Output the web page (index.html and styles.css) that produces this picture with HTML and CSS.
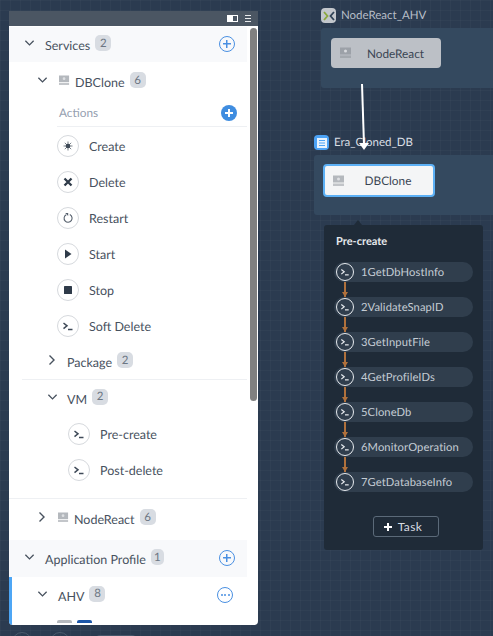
FILE: index.html
```html
<!DOCTYPE html>
<html lang="en">
<head>
<meta charset="utf-8">
<title>Blueprint editor</title>
<link rel="stylesheet" href="styles.css">
</head>
<body>
<svg width="0" height="0" class="defs">
  <defs>
    <symbol id="down" viewBox="0 0 12 8"><path d="M1.500 1.500 6 6l4.500-4.500" fill="none" stroke="currentColor" stroke-width="1.400"/></symbol>
    <symbol id="right" viewBox="0 0 8 12"><path d="M1.500 1.500 6 6l-4.500 4.500" fill="none" stroke="currentColor" stroke-width="1.400"/></symbol>
    <symbol id="term" viewBox="0 0 22 22"><path d="M6.500 8 10 10.800 6.500 13.600" fill="none" stroke="currentColor" stroke-width="1.500"/><path d="M11 14.500h4.500" fill="none" stroke="currentColor" stroke-width="1.500"/></symbol>
    <symbol id="server" viewBox="0 0 12 11"><path d="M0 0h11v7H0z" fill="currentColor"/><circle cx="5.500" cy="3.500" r="1.500" fill="#eceef0" opacity=".75"/><path d="M0 8h11v2.500H0z" fill="currentColor" opacity=".8"/></symbol>
  </defs>
</svg>

<div class="panel">
  <div class="panel-bar">
    <span class="layout-icon"><span class="layout-icon-fill"></span></span>
    <span class="menu-icon"></span>
  </div>
  <div class="tree">
    <div class="section section-services">
      <svg class="chev chev-l1"><use href="#down"/></svg>
      <span class="label">Services</span><span class="badge">2</span>
      <span class="add-outline"></span>
    </div>
    <div class="row row-dbclone">
      <svg class="chev chev-l2"><use href="#down"/></svg>
      <svg class="srv"><use href="#server"/></svg>
      <span class="label">DBClone</span><span class="badge">6</span>
    </div>
    <div class="row row-actions">
      <span class="muted">Actions</span>
      <span class="add-solid"></span>
    </div>
    <div class="actions">
      <div class="action">
        <span class="circle"><svg width="22" height="22" viewBox="0 0 22 22"><circle cx="11" cy="11" r="2.300" fill="#3f4a58"/><path d="M11 6.500v9M6.500 11h9M7.800 7.800l6.400 6.400M14.200 7.800l-6.400 6.400" stroke="#3f4a58" stroke-width=".7"/></svg></span>
        <span class="label">Create</span>
      </div>
      <div class="action">
        <span class="circle"><svg width="22" height="22" viewBox="0 0 22 22"><path d="M7.500 7.500l7 7M14.500 7.500l-7 7" stroke="#2f3b49" stroke-width="2.300"/></svg></span>
        <span class="label">Delete</span>
      </div>
      <div class="action">
        <span class="circle"><svg width="22" height="22" viewBox="0 0 22 22"><path d="M12.800 7.600a4 4 0 1 1-3.600.1" fill="none" stroke="#56606d" stroke-width="1.100"/><path d="M8.200 6h3v3z" fill="#56606d"/></svg></span>
        <span class="label">Restart</span>
      </div>
      <div class="action">
        <span class="circle"><svg width="22" height="22" viewBox="0 0 22 22"><path d="M8 6.500 14.500 11 8 15.500z" fill="#2f3b49"/></svg></span>
        <span class="label">Start</span>
      </div>
      <div class="action">
        <span class="circle"><svg width="22" height="22" viewBox="0 0 22 22"><rect x="7" y="7" width="8" height="8" rx=".6" fill="#2f3b49"/></svg></span>
        <span class="label">Stop</span>
      </div>
      <div class="action">
        <span class="circle"><svg class="term-ink"><use href="#term"/></svg></span>
        <span class="label">Soft Delete</span>
      </div>
    </div>
    <div class="row row-package">
      <svg class="chev-r chev-r3"><use href="#right"/></svg>
      <span class="label">Package</span><span class="badge">2</span>
    </div>
    <div class="row row-vm">
      <svg class="chev chev-l3"><use href="#down"/></svg>
      <span class="label">VM</span><span class="badge">2</span>
    </div>
    <div class="vm-tasks">
      <div class="action">
        <span class="circle"><svg class="term-ink"><use href="#term"/></svg></span>
        <span class="label">Pre-create</span>
      </div>
      <div class="action">
        <span class="circle"><svg class="term-ink"><use href="#term"/></svg></span>
        <span class="label">Post-delete</span>
      </div>
    </div>
    <div class="row row-node">
      <svg class="chev-r chev-r2"><use href="#right"/></svg>
      <svg class="srv"><use href="#server"/></svg>
      <span class="label">NodeReact</span><span class="badge">6</span>
    </div>
    <div class="section section-profile">
      <svg class="chev chev-l1"><use href="#down"/></svg>
      <span class="label">Application Profile</span><span class="badge badge-narrow">1</span>
      <span class="add-outline"></span>
    </div>
    <div class="profile">
      <div class="row row-ahv">
        <svg class="chev chev-l2"><use href="#down"/></svg>
        <span class="label label-ahv">AHV</span><span class="badge">8</span>
        <span class="more"><i></i><i></i><i></i></span>
      </div>
      <div class="stubs"><span class="stub stub-grey"></span><span class="stub stub-blue"></span></div>
    </div>
  </div>
  <div class="scrollbar"></div>
</div>

<svg class="link" width="30" height="90" viewBox="0 0 30 90"><path d="M11 3 13 64" stroke="#fff" stroke-width="2" fill="none"/><path d="M8 62h10l-5 7z" fill="#fff"/></svg>

<div class="group-title title-node">
  <span class="provider provider-ntx"><svg width="12" height="10" viewBox="0 0 12 10"><path d="M1 1l3.500 4L1 9" fill="none" stroke="#8aa83c" stroke-width="1.800"/><path d="M11 1 7.500 5 11 9" fill="none" stroke="#2f4256" stroke-width="1.800"/></svg></span>
  <span>NodeReact_AHV</span>
</div>
<div class="group group-node">
  <div class="node node-grey"><svg class="node-srv"><use href="#server"/></svg><span class="node-name">NodeReact</span></div>
</div>

<div class="group-title title-era">
  <span class="provider provider-era"><svg width="10" height="10" viewBox="0 0 10 10"><path d="M0 0h10v10H0z" fill="#e9f3fd"/><path d="M2 2.500h6M2 5h6M2 7.500h6" stroke="#4da3f5" stroke-width="1"/></svg></span>
  <span>Era_Cloned_DB</span>
</div>
<div class="group group-era">
  <div class="node node-selected"><svg class="node-srv"><use href="#server"/></svg><span class="node-name">DBClone</span></div>
</div>

<div class="popover">
  <div class="pop-title">Pre-create</div>
  <div class="tasks">
    <div class="task"><span class="task-icon"><svg class="term-light"><use href="#term"/></svg></span><span>1GetDbHostInfo</span></div>
    <div class="flow"></div>
    <div class="task"><span class="task-icon"><svg class="term-light"><use href="#term"/></svg></span><span>2ValidateSnapID</span></div>
    <div class="flow"></div>
    <div class="task"><span class="task-icon"><svg class="term-light"><use href="#term"/></svg></span><span>3GetInputFile</span></div>
    <div class="flow"></div>
    <div class="task"><span class="task-icon"><svg class="term-light"><use href="#term"/></svg></span><span>4GetProfileIDs</span></div>
    <div class="flow"></div>
    <div class="task"><span class="task-icon"><svg class="term-light"><use href="#term"/></svg></span><span>5CloneDb</span></div>
    <div class="flow"></div>
    <div class="task"><span class="task-icon"><svg class="term-light"><use href="#term"/></svg></span><span>6MonitorOperation</span></div>
    <div class="flow"></div>
    <div class="task"><span class="task-icon"><svg class="term-light"><use href="#term"/></svg></span><span>7GetDatabaseInfo</span></div>
  </div>
  <button class="task-btn" type="button"><span class="task-plus"></span>Task</button>
</div>

<div class="dock">
  <span class="dock-circle"></span><span class="dock-circle"></span><span class="dock-pill"></span>
</div>
</body>
</html>
```
FILE: styles.css
```css
* { box-sizing: border-box; }
html, body { margin: 0; height: 100%; }
body {
  position: relative;
  width: 493px;
  height: 636px;
  overflow: hidden;
  font-family: Lato, "Open Sans", sans-serif;
  text-rendering: geometricPrecision;
  color: #3f4a58;
  background-color: #2b3b50;
  background-image:
    linear-gradient(rgba(255,255,255,.025) 1px, transparent 1px),
    linear-gradient(90deg, rgba(255,255,255,.025) 1px, transparent 1px);
  background-size: 10px 10px;
}
.defs { position: absolute; }

/* left panel */
.panel {
  position: absolute;
  left: 9px; top: 11px;
  width: 249px; height: 614px;
  background: #fff;
  border-radius: 0 0 4px 4px;
  overflow: hidden;
}
.panel-bar {
  height: 15px;
  background: #4b5663;
  display: flex;
  align-items: center;
  justify-content: flex-end;
  gap: 7px;
  padding-right: 7px;
}
.layout-icon { width: 11px; height: 7px; border: 1px solid #fff; display: flex; }
.layout-icon-fill { width: 5px; background: #fff; }
.menu-icon {
  width: 6px; height: 7px;
  border-top: 1px solid #e8eaec;
  border-bottom: 1px solid #e8eaec;
  position: relative;
}
.menu-icon::after { content: ""; position: absolute; left: 0; right: 0; top: 2px; height: 1px; background: #e8eaec; }
.tree { width: 238px; font-size: 12.500px; }
.label { color: #47515e; white-space: nowrap; padding-top: 2px; }
.action .label { padding-top: 0; }
.badge {
  display: inline-flex; align-items: center; justify-content: center;
  width: 16px; height: 16px;
  margin-left: 5px; margin-top: -3px;
  border-radius: 5px;
  background: #d8dce2;
  color: #6c7683;
  font-size: 11.500px;
}
.badge-narrow { width: 13px; }
.section { display: flex; align-items: center; background: #f8f9fb; position: relative; }
.section-services { height: 35px; padding-left: 15px; margin-top: 1px; }
.section-profile { height: 37px; padding-left: 15px; }
.row { display: flex; align-items: center; position: relative; }
.chev { width: 11px; height: 8px; color: #47515e; flex: none; margin-top: -3px; }
.chev-r { width: 8px; height: 12px; color: #47515e; flex: none; margin-top: -3px; }
.chev-l1 { margin-right: 10px; }
.chev-l2 { margin-left: 28px; margin-right: 11px; }
.chev-l3 { margin-left: 38px; margin-right: 9px; }
.chev-r3 { margin-left: 39px; margin-right: 11px; }
.chev-r2 { margin-left: 29px; margin-right: 12px; }
.srv { width: 11px; height: 11px; margin-right: 5px; flex: none; margin-top: -3px; color: #b4b8bd; }
.add-outline {
  position: absolute;
  right: 12px; top: 50%;
  width: 16px; height: 16px;
  margin-top: -9px;
  border: 1.200px solid #4a90e2;
  border-radius: 50%;
  background:
    linear-gradient(#4a90e2,#4a90e2) center/8px 1.500px no-repeat,
    linear-gradient(#4a90e2,#4a90e2) center/1.500px 8px no-repeat;
}
.add-solid {
  position: absolute;
  right: 10px; top: 50%;
  width: 16px; height: 16px;
  margin-top: -8px;
  border-radius: 50%;
  background:
    linear-gradient(#fff,#fff) center/8px 2px no-repeat,
    linear-gradient(#fff,#fff) center/2px 8px no-repeat,
    #3f8de0;
}
.row-dbclone { height: 37px; padding-top: 2px; }
.row-actions { height: 27px; margin-left: 48px; padding-left: 2px; }
.muted { color: #95a0b0; font-size: 11.800px; }
.actions {
  margin-left: 48px;
  padding-top: 1px;
  border-top: 1px solid #eef0f3;
  display: flex; flex-direction: column;
}
.action { height: 36px; display: flex; align-items: center; }
.circle {
  width: 22px; height: 22px;
  border: 1px solid #d6d9dd;
  border-radius: 50%;
  display: flex; align-items: center; justify-content: center;
  margin-right: 10px;
  flex: none;
}
.circle svg { margin: -1px; flex: none; }
.term-ink { width: 22px; height: 22px; color: #3f4a58; }
.term-light { width: 18px; height: 18px; color: #e7ebef; }
.row-package { height: 36px; border-bottom: 1px solid #eef0f3; margin-left: 13px; }
.row-package .chev-r3 { margin-left: 26px; }
.row-vm { height: 36px; }
.vm-tasks { padding-left: 59px; padding-bottom: 10px; border-bottom: 1px solid #eef0f3; }
.row-node { height: 41px; padding-bottom: 2px; }
.profile { border-left: 3px solid #4da6f5; height: 48px; overflow: hidden; }
.row-ahv { height: 36px; }
.row-ahv .chev-l2 { margin-left: 25px; margin-right: 10px; }
.more {
  position: absolute; right: 14px; top: 50%;
  width: 16px; height: 16px; margin-top: -8px;
  border: 1.200px solid #4a90e2; border-radius: 50%;
  display: flex; align-items: center; justify-content: center; gap: 1.500px;
}
.more i { width: 2px; height: 2px; border-radius: 50%; background: #4a90e2; }
.stubs { display: flex; gap: 5px; padding-left: 45px; padding-top: 7px; }
.stub { width: 15px; height: 3px; border-radius: 2px 2px 0 0; }
.stub-grey { background: #b4b8bd; }
.stub-blue { background: #1c56a8; }
.scrollbar {
  position: absolute;
  right: 1px; top: 17px;
  width: 7px; height: 373px;
  border-radius: 4px;
  background: #808080;
}

/* canvas */
.link { position: absolute; left: 351px; top: 81px; z-index: 3; }
.group-title {
  position: absolute;
  display: flex; align-items: center; gap: 5px;
  font-size: 11.500px;
  white-space: nowrap;
}
.title-node { left: 321px; top: 7px; color: #b7bec7; }
.title-era { left: 314px; top: 134px; color: #d9dee4; }
.provider {
  width: 15px; height: 15px; border-radius: 4px;
  display: flex; align-items: center; justify-content: center;
  flex: none;
}
.provider-ntx { background: #c3c7cc; margin-top: 1px; }
.provider-era { background: #4da3f5; margin-top: 1px; }
.group { position: absolute; background: #34495f; border-radius: 3px 0 0 3px; }
.group-node { left: 321px; top: 28px; width: 172px; height: 60px; padding: 10px; }
.group-era { left: 314px; top: 155px; width: 179px; height: 60px; padding: 9px; }
.node {
  display: flex; align-items: center;
  border-radius: 4px;
  font-size: 11.800px;
  color: #3a4553;
}
.node-grey { width: 110px; height: 30px; background: #bcc0c6; padding-left: 9px; }
.node-selected {
  width: 112px; height: 33px;
  background: #f4f5f6;
  border: 2px solid #5cb0f5;
  padding-left: 8px;
}
.node-srv { width: 12px; height: 12px; flex: none; color: #9ca1a8; }
.node-selected .node-srv { color: #b4b8bd; }
.node-name { flex: 1; text-align: center; padding-right: 2px; }
.popover {
  position: absolute;
  left: 324px; top: 225px;
  width: 159px; height: 325px;
  background: #1f2b38;
  border-radius: 3px;
  padding: 10px 10px 0;
  color: #fff;
  display: flex; flex-direction: column;
  z-index: 2;
}
.popover::before {
  content: "";
  position: absolute;
  left: 30px; top: -5px;
  border: 4px solid transparent;
  border-top: 0;
  border-bottom: 5px solid #1f2b38;
}
.pop-title { font-size: 11px; font-weight: 700; color: #e6e9ec; margin-left: 2px; height: 16px; line-height: 14px; }
.tasks { margin-top: 11px; }
.task {
  height: 20px;
  width: 139px;
  border-radius: 10px;
  background: #303e4d;
  display: flex; align-items: center;
  font-size: 11.200px;
  letter-spacing: .1px;
  color: #c4ccd4;
  position: relative;
}
.task-icon {
  width: 18px; height: 18px;
  margin-left: 2px; margin-right: 7px;
  border: 1.200px solid #e7ebef;
  border-radius: 50%;
  display: flex; align-items: center; justify-content: center;
  flex: none;
}
.task-icon svg { flex: none; margin: -1px; }
.flow {
  height: 15px;
  margin-left: 10px;
  width: 2px;
  background: #b0713c;
  position: relative;
}
.flow::after {
  content: "";
  position: absolute;
  left: -2.500px; bottom: 0;
  border: 3.500px solid transparent;
  border-bottom: 0;
  border-top: 5px solid #b0713c;
}
.task-btn {
  align-self: center;
  width: 66px; height: 21px;
  margin-top: 24px;
  margin-left: 5px;
  border: 1px solid #5b6a79;
  border-radius: 3px;
  background: transparent;
  color: #d7dce1;
  font: 12px Lato, sans-serif;
  letter-spacing: .4px;
  display: flex; align-items: center; justify-content: center;
  gap: 6px;
  padding: 0 6px 0 0;
}
.task-plus {
  width: 8px; height: 8px;
  background:
    linear-gradient(#fff,#fff) center/8px 2px no-repeat,
    linear-gradient(#fff,#fff) center/2px 8px no-repeat;
}
.dock { position: absolute; left: 12px; top: 632px; display: flex; gap: 18px; }
.dock-circle { width: 20px; height: 20px; border: 1px solid #4a5a6c; border-radius: 50%; }
.dock-pill { width: 42px; height: 14px; border-radius: 5px; background: #46566a; margin-left: 7px; margin-top: 3px; }
```
